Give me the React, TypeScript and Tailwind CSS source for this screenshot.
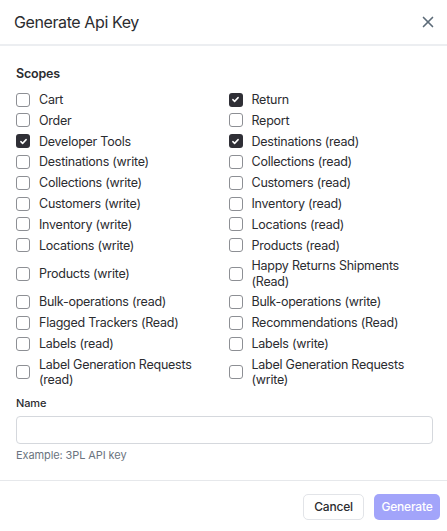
import { X } from 'lucide-react'

const scopes: { name: string; checked?: boolean }[][] = [
  [{ name: 'Cart' }, { name: 'Return', checked: true }],
  [{ name: 'Order' }, { name: 'Report' }],
  [{ name: 'Developer Tools', checked: true }, { name: 'Destinations (read)', checked: true }],
  [{ name: 'Destinations (write)' }, { name: 'Collections (read)' }],
  [{ name: 'Collections (write)' }, { name: 'Customers (read)' }],
  [{ name: 'Customers (write)' }, { name: 'Inventory (read)' }],
  [{ name: 'Inventory (write)' }, { name: 'Locations (read)' }],
  [{ name: 'Locations (write)' }, { name: 'Products (read)' }],
  [{ name: 'Products (write)' }, { name: 'Happy Returns Shipments (Read)' }],
  [{ name: 'Bulk-operations (read)' }, { name: 'Bulk-operations (write)' }],
  [{ name: 'Flagged Trackers (Read)' }, { name: 'Recommendations (Read)' }],
  [{ name: 'Labels (read)' }, { name: 'Labels (write)' }],
  [{ name: 'Label Generation Requests (read)' }, { name: 'Label Generation Requests (write)' }],
]

function Checkbox({ checked }: { checked?: boolean }) {
  if (checked) {
    return (
      <span className="flex h-[14px] w-[14px] shrink-0 items-center justify-center rounded-[3px] bg-[#2f2f36]">
        <svg viewBox="0 0 12 12" className="h-[9px] w-[9px]" fill="none" stroke="white" strokeWidth="2" strokeLinecap="round" strokeLinejoin="round">
          <path d="M2.5 6.2l2.3 2.3 4.7-5" />
        </svg>
      </span>
    )
  }
  return <span className="h-[14px] w-[14px] shrink-0 rounded-[3px] border border-[#8d8f94] bg-white" />
}

export default function App() {
  return (
    <div className="h-[531px] w-[447px] overflow-hidden bg-white font-['Inter',sans-serif] text-[#2b2c30]">
      {/* Header */}
      <div className="flex h-[46px] items-center justify-between border-b-2 border-[#eceef1] pl-[14px] pr-[10px]">
        <h2 className="text-[16px] font-normal tracking-[-0.4px] text-[#2b2c30]">Generate Api Key</h2>
        <X className="h-[18px] w-[18px] text-[#5c6b78]" strokeWidth={2.2} />
      </div>

      {/* Body */}
      <div className="pl-4 pr-[14px] pt-[20px] pb-[17px]">
        <div className="text-[12.5px] font-semibold leading-[16px] tracking-[-0.2px] text-[#2b2c30]">Scopes</div>
        <div className="mt-[10px] grid grid-cols-2 gap-x-2 gap-y-[5.5px]">
          {scopes.flat().map((s) => (
            <label key={s.name} className="flex items-center gap-[9px]">
              <Checkbox checked={s.checked} />
              <span className="text-[12.5px] leading-[15.3px] tracking-[-0.25px] text-[#2b2c30]">{s.name}</span>
            </label>
          ))}
        </div>

        <div className="mt-[9px] text-[11px] font-medium leading-[15px] tracking-[-0.1px] text-[#2b2c30]">Name</div>
        <input className="mt-[5px] block h-[28px] w-full rounded-[4px] border border-[#d5d8dd] px-2 text-[13px] outline-none" />
        <div className="mt-[4px] text-[11px] leading-[15px] tracking-[-0.1px] text-[#6b7480]">Example: 3PL API key</div>
      </div>

      {/* Footer */}
      <div className="flex justify-end gap-[10px] border-t border-[#e6e8eb] px-[7px] pt-[13px]">
        <button className="h-[26px] w-[61px] rounded-[5px] border border-[#e2e4e8] bg-white text-[12px] font-medium tracking-[-0.2px] text-[#2b2c30]">
          Cancel
        </button>
        <button className="h-[26px] w-[66px] rounded-[5px] bg-[#a2a4fa] text-[12px] font-medium tracking-[-0.2px] text-white">
          Generate
        </button>
      </div>
    </div>
  )
}
